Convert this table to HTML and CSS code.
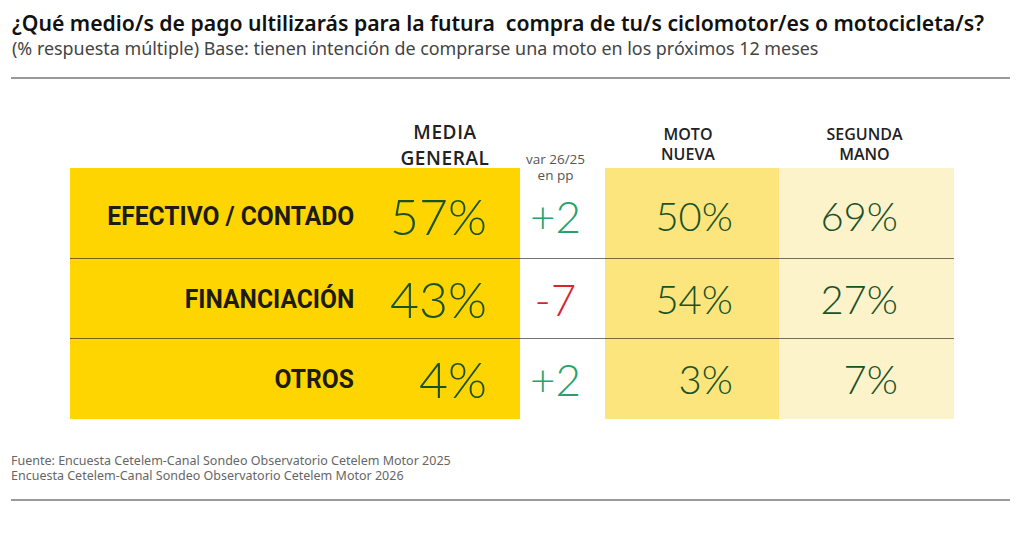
FILE: index.html
```html
<!DOCTYPE html>
<html lang="es">
<head>
<meta charset="utf-8">
<link rel="stylesheet" href="styles.css">
</head>
<body>
<div class="page">
  <header class="head">
    <h1 class="title">¿Qué medio/s de pago ultilizarás para la futura&nbsp; compra de tu/s ciclomotor/es o motocicleta/s?</h1>
    <p class="subtitle">(% respuesta múltiple) Base: tienen intención de comprarse una moto en los próximos 12 meses</p>
  </header>
  <hr class="rule rule-top">
  <section class="chart">
    <div class="colheads">
      <div class="ch ch-label"></div>
      <div class="ch ch-media">MEDIA<br>GENERAL</div>
      <div class="ch ch-var">var 26/25<br>en pp</div>
      <div class="ch ch-moto">MOTO<br>NUEVA</div>
      <div class="ch ch-seg">SEGUNDA<br>MANO</div>
    </div>
    <div class="table">
      <div class="row row-1">
        <div class="cell label"><span class="label-text">EFECTIVO / CONTADO</span></div>
        <div class="cell media">57%</div>
        <div class="cell var up">+2</div>
        <div class="cell moto">50%</div>
        <div class="cell seg">69%</div>
      </div>
      <div class="row row-2">
        <div class="cell label"><span class="label-text">FINANCIACIÓN</span></div>
        <div class="cell media">43%</div>
        <div class="cell var down">-7</div>
        <div class="cell moto">54%</div>
        <div class="cell seg">27%</div>
      </div>
      <div class="row row-3">
        <div class="cell label"><span class="label-text">OTROS</span></div>
        <div class="cell media">4%</div>
        <div class="cell var up">+2</div>
        <div class="cell moto">3%</div>
        <div class="cell seg">7%</div>
      </div>
    </div>
  </section>
  <footer class="source">
    <p>Fuente: Encuesta Cetelem-Canal Sondeo Observatorio Cetelem Motor 2025</p>
    <p>Encuesta Cetelem-Canal Sondeo Observatorio Cetelem Motor 2026</p>
  </footer>
  <hr class="rule rule-bottom">
</div>
</body>
</html>
```
FILE: styles.css
```css
html, body {
  margin: 0;
  padding: 0;
  background: #ffffff;
}

.page {
  width: 1024px;
  height: 551px;
  padding: 0 14px 0 11px;
  box-sizing: border-box;
  font-family: "Open Sans", "Noto Sans", sans-serif;
  color: #1a1a1a;
}

.head {
  padding: 10px 0 0 1px;
}

.title {
  margin: 0;
  font-family: "Noto Sans", sans-serif;
  font-weight: 600;
  font-size: 21.2px;
  line-height: 26px;
  color: #111;
  white-space: nowrap;
}

.subtitle {
  margin: 0;
  padding-top: 2px;
  font-family: "Noto Sans", sans-serif;
  font-size: 17.9px;
  line-height: 21px;
  color: #444;
  white-space: nowrap;
}

.rule {
  border: 0;
  height: 2px;
  background: #9a9a9a;
  margin: 0;
}

.rule-top {
  margin-top: 18px;
}

.chart {
  padding-left: 59px;
  margin-top: 40px;
}

.colheads,
.row {
  display: grid;
  grid-template-columns: 300px 150px 85px 174px 175px;
}

.colheads {
  align-items: end;
  height: 49px;
}

.ch {
  text-align: center;
  color: #222;
}

.ch-media {
  font-size: 19px;
  letter-spacing: 0.6px;
  font-weight: 600;
  line-height: 26px;
  margin-bottom: 0;
}

.ch-var {
  font-size: 13.5px;
  line-height: 16px;
  color: #555;
  padding-right: 14px;
  margin-bottom: -12px;
  position: relative;
  z-index: 1;
}

.ch-moto,
.ch-seg {
  font-size: 16px;
  line-height: 20px;
  font-weight: 600;
  margin-bottom: 7px;
}

.ch-moto {
  padding-right: 8px;
}

.ch-seg {
  padding-right: 4px;
}

.table {
  display: flex;
  flex-direction: column;
}

.row-1 { height: 90px; }
.row-2 { height: 80px; }
.row-3 { height: 81px; }

.row + .row .cell {
  border-top: 1px solid rgba(30, 30, 30, 0.62);
}

.cell {
  display: flex;
  align-items: center;
  box-sizing: border-box;
}

.row-1 .cell { padding-top: 6px; }

.label {
  background: #ffd500;
  justify-content: flex-end;
  padding-right: 16px;
  font-family: "Roboto", "DejaVu Sans", sans-serif;
  font-weight: 700;
  font-size: 26px;
  color: #1c1c14;
}

.label-text {
  display: inline-block;
  transform: scaleX(0.945);
  transform-origin: right center;
  white-space: nowrap;
}

.media {
  background: #ffd500;
  justify-content: flex-end;
  padding-right: 33px;
  font-family: "Lato", sans-serif;
  font-weight: 300;
  font-size: 50px;
  color: #1a5228;
}

.var {
  background: transparent;
  justify-content: center;
  padding-right: 14px;
  font-family: "Lato", sans-serif;
  font-weight: 300;
  font-size: 44px;
}

.var.up { color: #27a06c; }
.var.down { color: #d9232e; }

.moto,
.seg {
  justify-content: flex-end;
  font-family: "Lato", sans-serif;
  font-weight: 300;
  font-size: 40px;
  color: #1a5228;
}

.moto {
  background: #fce57c;
  padding-right: 46px;
}

.seg {
  background: #fdf3cb;
  padding-right: 56px;
}

.source {
  margin-top: 34px;
  font-family: "Noto Sans", sans-serif;
  font-size: 12.5px;
  line-height: 15px;
  color: #666;
}

.source p {
  margin: 0;
}

.rule-bottom {
  margin-top: 16px;
}
```
